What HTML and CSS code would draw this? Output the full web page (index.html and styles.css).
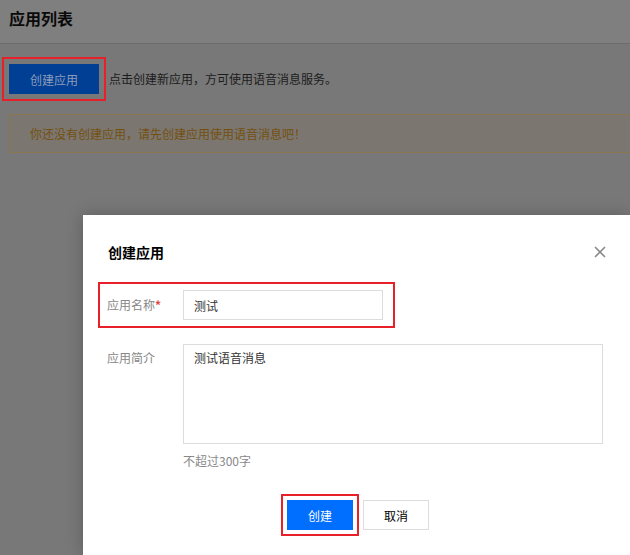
FILE: index.html
```html
<!DOCTYPE html>
<html lang="zh-CN">
<head>
<meta charset="utf-8">
<title>应用列表</title>
<link rel="stylesheet" href="styles.css">
</head>
<body>
<div class="page">
  <div class="header"><h1 class="title">应用列表</h1></div>
  <div class="content">
    <div class="action-row">
      <button class="btn-create-app">创建应用</button>
      <span class="action-desc">点击创建新应用，方可使用语音消息服务。</span>
    </div>
    <div class="alert">你还没有创建应用，请先创建应用使用语音消息吧！</div>
  </div>
</div>

<div class="dialog">
  <div class="dialog-head">
    <h2 class="dialog-title">创建应用</h2>
    <span class="dialog-close">
      <svg width="12" height="12" viewBox="0 0 12 12"><path d="M1 1L11 11M11 1L1 11" stroke="#888" stroke-width="1.6" fill="none"/></svg>
    </span>
  </div>
  <div class="form">
    <div class="form-row highlight center">
      <label class="form-label">应用名称<span class="req">*</span></label>
      <div class="form-ctrl"><input class="input" type="text" value="测试"></div>
    </div>
    <div class="form-row">
      <label class="form-label top">应用简介</label>
      <div class="form-ctrl">
        <textarea class="textarea">测试语音消息</textarea>
        <div class="hint">不超过300字</div>
      </div>
    </div>
  </div>
  <div class="dialog-foot">
    <button class="btn btn-primary">创建</button>
    <button class="btn btn-default">取消</button>
  </div>
</div>
</body>
</html>
```

FILE: styles.css
```css
* { box-sizing: border-box; }
html, body { margin: 0; padding: 0; }
body {
  width: 630px;
  height: 555px;
  overflow: hidden;
  background: #787878;
  font-family: "Noto Sans CJK SC", "Noto Sans", sans-serif;
  font-size: 12px;
  position: relative;
}
.header {
  height: 44px;
  background: #7f7f7f;
  border-bottom: 1px solid #6c6c6c;
  padding: 8px 0 0 9px;
}
.title {
  margin: 0;
  font-size: 16px;
  line-height: 20px;
  font-weight: bold;
  color: #0a0a0a;
}
.content {
  padding: 20px 0 0 9px;
}
.action-row {
  display: flex;
  align-items: center;
  gap: 10px;
}
.btn-create-app {
  width: 90px;
  height: 30px;
  border: 0;
  background: #003f94;
  color: #8d9cba;
  font-family: inherit;
  font-size: 12px;
  outline: 2px solid #e8202a;
  outline-offset: 5px;
  padding: 0;
}
.action-desc {
  color: #1c1c1c;
  line-height: 18px;
}
.alert {
  margin-top: 20px;
  margin-right: -2px;
  height: 39px;
  line-height: 37px;
  border: 1px solid #8a7550;
  background: #7b7670;
  color: #74500f;
  padding-left: 20px;
}
.dialog {
  position: absolute;
  left: 83px;
  top: 215px;
  width: 547px;
  height: 340px;
  background: #fff;
  box-shadow: 0 0 16px rgba(0, 0, 0, 0.22);
}
.dialog-head {
  display: flex;
  align-items: center;
  justify-content: space-between;
  padding: 28px 23px 0 25px;
}
.dialog-title {
  margin: 0;
  font-size: 14px;
  line-height: 18px;
  font-weight: bold;
  color: #000;
}
.dialog-close {
  display: flex;
  margin-right: 1px;
}
.form {
  padding: 21px 0 0 15px;
}
.form-row {
  display: inline-flex;
  align-items: flex-start;
  border: 2px solid transparent;
  padding: 6px 10px 6px 7px;
}
.form-row + .form-row { margin-top: 8px; }
.form-row.center { align-items: center; }
.form-row.highlight { border-color: #e8202a; }
.form-label {
  width: 76px;
  color: #888;
  line-height: 18px;
}
.form-label.top { padding-top: 5px; }
.req { color: #e54545; font-weight: bold; }
.form-ctrl { display: flex; flex-direction: column; }
.input {
  width: 200px;
  height: 30px;
  border: 1px solid #dcdcdc;
  padding: 0 10px;
  font-family: inherit;
  font-size: 12px;
  color: #333;
  outline: none;
}
.textarea {
  width: 420px;
  height: 100px;
  border: 1px solid #dcdcdc;
  padding: 4px 10px;
  font-family: inherit;
  font-size: 12px;
  line-height: 18px;
  color: #333;
  resize: none;
  outline: none;
  margin: 0;
  display: block;
}
.hint {
  margin-top: 8px;
  line-height: 18px;
  color: #888;
}
.dialog-foot {
  display: flex;
  justify-content: flex-start;
  gap: 10px;
  margin-top: 22px;
  padding-left: 204px;
}
.btn {
  width: 66px;
  height: 30px;
  font-family: inherit;
  font-size: 12px;
  padding: 0;
}
.btn-primary {
  border: 0;
  background: #006eff;
  color: #fff;
  outline: 2px solid #e8202a;
  outline-offset: 4px;
}
.btn-default {
  border: 1px solid #dcdcdc;
  background: #fff;
  color: #000;
}
```
